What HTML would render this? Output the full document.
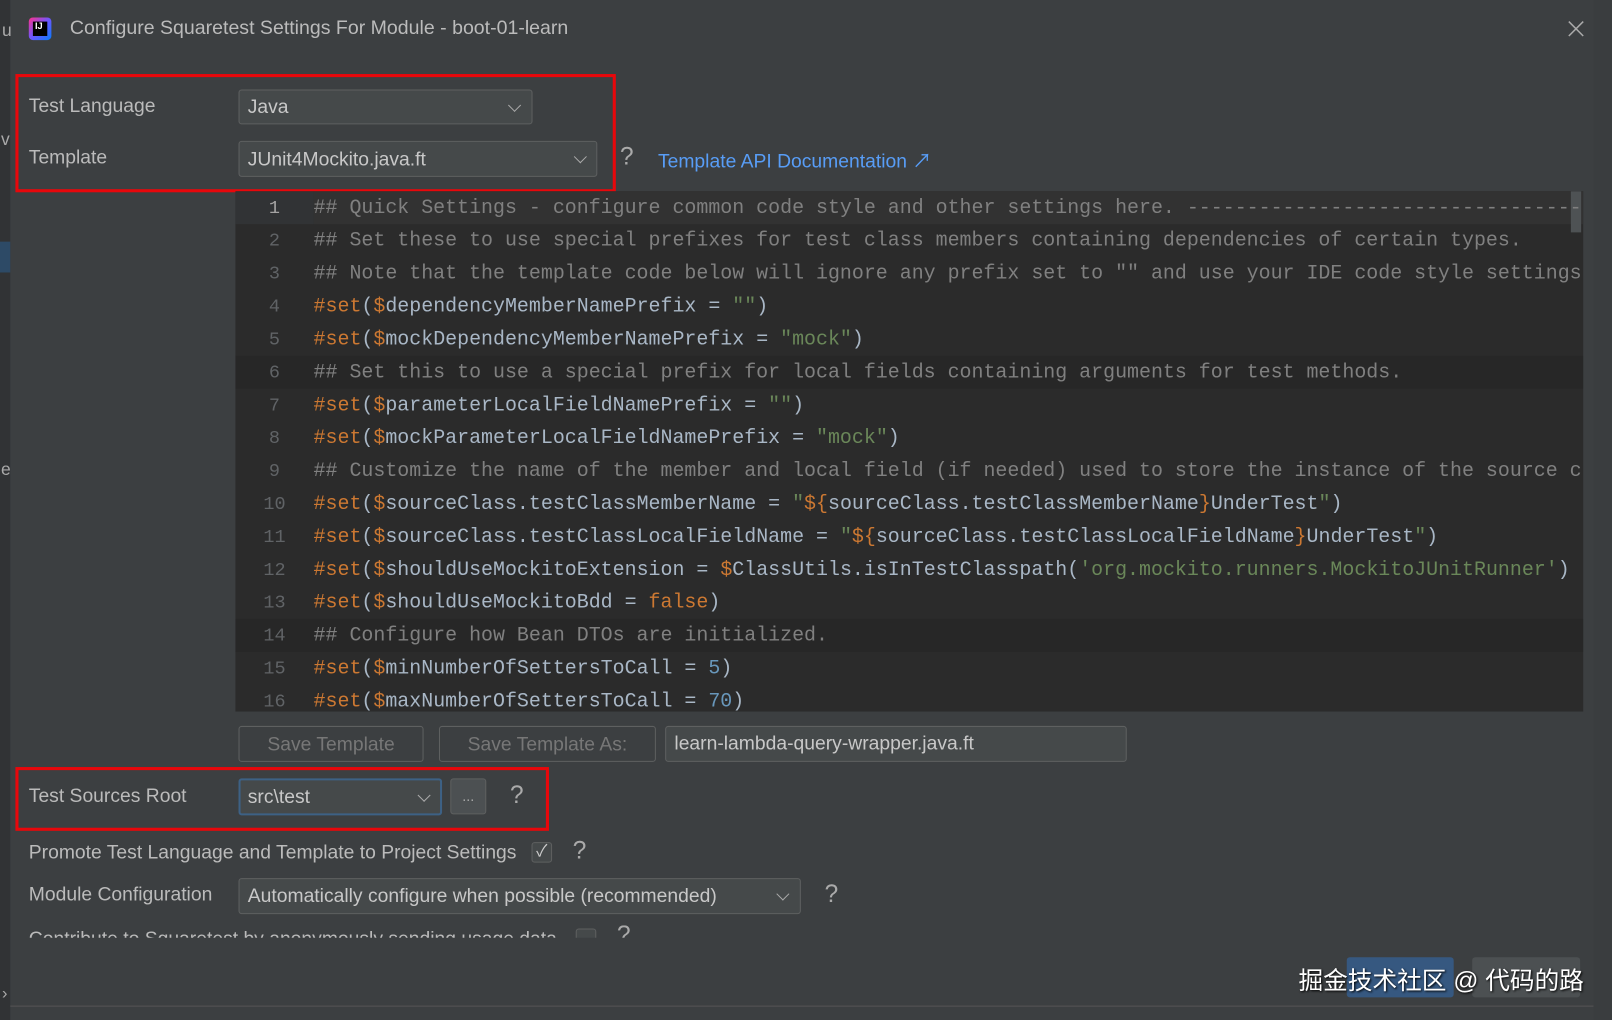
<!DOCTYPE html>
<html><head><meta charset="utf-8"><style>
html,body{margin:0;padding:0;width:1612px;height:1020px;overflow:hidden;background:#3c3f41}
#w{position:absolute;left:0;top:0;width:1568px;height:992px;transform:scale(1.02806,1.02823);transform-origin:0 0;background:#3c3f41;font-family:"Liberation Sans","Noto Sans CJK SC",sans-serif;color:#bbbbbb;font-size:18px}
.a{position:absolute;white-space:nowrap}
.lbl{font-size:18.8px;color:#bbbbbb}
.box{position:absolute;border:1px solid #5e6060;background:#45494a;border-radius:3px;box-sizing:border-box}
.chev{position:absolute;width:8px;height:8px;border-right:1.6px solid #aaa;border-bottom:1.6px solid #aaa;transform:rotate(45deg)}
.red{position:absolute;border:3px solid #e8070b;box-sizing:border-box}
.q{position:absolute;font-size:24px;color:#aaa}
#ed{position:absolute;left:229px;top:186px;width:1311px;height:506px;background:#2b2b2b;overflow:hidden}
.ln{position:absolute;left:0;width:76px;text-align:center;color:#606366;font-family:"Liberation Mono",monospace;font-size:18px;margin-top:2px}
.cd{position:absolute;left:76px;font-family:"Liberation Mono",monospace;font-size:19.4px;color:#a9b7c6;white-space:pre}
.c{color:#808080}.k{color:#cc7832}.s{color:#6a8759}.n{color:#6897bb}
.btn{position:absolute;border:1px solid #5e6060;border-radius:3px;background:#3c3f41;color:#777;text-align:center;box-sizing:border-box;font-size:18.8px}
</style></head><body><div id="w">
<div class="a" style="left:0;top:0;width:10px;height:992px;background:#313335"></div>
<div class="a" style="left:0;top:235px;width:10px;height:30px;background:#2d4a66"></div>
<div class="a" style="left:2px;top:20px;font-size:17px;color:#aaa">u</div>
<div class="a" style="left:1px;top:126px;font-size:17px;color:#aaa">v</div>
<div class="a" style="left:1px;top:447px;font-size:17px;color:#aaa">e</div>
<div class="a" style="left:28px;top:17px;width:22px;height:22px;border-radius:4px;background:linear-gradient(135deg,#ff318c,#6b57ff 50%,#087cfa)"></div>
<div class="a" style="left:32px;top:21px;width:14px;height:14px;background:#000"></div>
<div class="a" style="left:34px;top:20px;font-size:9px;color:#fff;font-weight:bold">IJ</div>
<div class="a" style="left:68px;top:17px;font-size:19px;color:#bbb">Configure Squaretest Settings For Module - boot-01-learn</div>
<svg class="a" style="left:1525px;top:20px" width="16" height="16"><path d="M1 1L15 15M15 1L1 15" stroke="#aaa" stroke-width="1.5"/></svg>
<div class="red" style="left:15px;top:72px;width:584px;height:115px"></div>
<div class="a lbl" style="left:28px;top:92px">Test Language</div>
<div class="box" style="left:232px;top:87px;width:286px;height:34px"></div>
<div class="a lbl" style="left:241px;top:93px;color:#c8c8c8">Java</div>
<div class="chev" style="left:496px;top:98px"></div>
<div class="a lbl" style="left:28px;top:142px">Template</div>
<div class="box" style="left:232px;top:137px;width:349px;height:35px"></div>
<div class="a lbl" style="left:241px;top:144px;color:#c8c8c8">JUnit4Mockito.java.ft</div>
<div class="chev" style="left:560px;top:148px"></div>
<div class="q" style="left:603px;top:139px">?</div>
<div class="a" style="left:640px;top:142px;color:#589df6;font-size:18.8px">Template API Documentation ↗</div>
<div id="ed">
<div class="a" style="left:76px;top:0;width:1235px;height:32px;background:#323232"></div>
<div class="a" style="left:0;top:0;width:76px;height:32px;background:#313335"></div>
<div class="a" style="left:0;top:160px;width:1311px;height:32px;background:#272727"></div>
<div class="a" style="left:0;top:416px;width:1311px;height:32px;background:#272727"></div>
<div class="a" style="left:1299px;top:0;width:10px;height:40px;background:#4e5254"></div>
<div class="ln" style="top:5px;color:#a4a3a3">1</div><div class="cd c" style="top:5px">## Quick Settings - configure common code style and other settings here. ----------------------------------------</div>
<div class="ln" style="top:37px">2</div><div class="cd c" style="top:37px">## Set these to use special prefixes for test class members containing dependencies of certain types.</div>
<div class="ln" style="top:69px">3</div><div class="cd c" style="top:69px">## Note that the template code below will ignore any prefix set to "" and use your IDE code style settings</div>
<div class="ln" style="top:101px">4</div><div class="cd" style="top:101px"><span class="k">#set</span>(<span class="k">$</span>dependencyMemberNamePrefix = <span class="s">""</span>)</div>
<div class="ln" style="top:133px">5</div><div class="cd" style="top:133px"><span class="k">#set</span>(<span class="k">$</span>mockDependencyMemberNamePrefix = <span class="s">"mock"</span>)</div>
<div class="ln" style="top:165px">6</div><div class="cd c" style="top:165px">## Set this to use a special prefix for local fields containing arguments for test methods.</div>
<div class="ln" style="top:197px">7</div><div class="cd" style="top:197px"><span class="k">#set</span>(<span class="k">$</span>parameterLocalFieldNamePrefix = <span class="s">""</span>)</div>
<div class="ln" style="top:229px">8</div><div class="cd" style="top:229px"><span class="k">#set</span>(<span class="k">$</span>mockParameterLocalFieldNamePrefix = <span class="s">"mock"</span>)</div>
<div class="ln" style="top:261px">9</div><div class="cd c" style="top:261px">## Customize the name of the member and local field (if needed) used to store the instance of the source c</div>
<div class="ln" style="top:293px">10</div><div class="cd" style="top:293px"><span class="k">#set</span>(<span class="k">$</span>sourceClass.testClassMemberName = <span class="s">"</span><span class="k">${</span>sourceClass.testClassMemberName<span class="k">}</span>UnderTest<span class="s">"</span>)</div>
<div class="ln" style="top:325px">11</div><div class="cd" style="top:325px"><span class="k">#set</span>(<span class="k">$</span>sourceClass.testClassLocalFieldName = <span class="s">"</span><span class="k">${</span>sourceClass.testClassLocalFieldName<span class="k">}</span>UnderTest<span class="s">"</span>)</div>
<div class="ln" style="top:357px">12</div><div class="cd" style="top:357px"><span class="k">#set</span>(<span class="k">$</span>shouldUseMockitoExtension = <span class="k">$</span>ClassUtils.isInTestClasspath(<span class="s">'org.mockito.runners.MockitoJUnitRunner'</span>)</div>
<div class="ln" style="top:389px">13</div><div class="cd" style="top:389px"><span class="k">#set</span>(<span class="k">$</span>shouldUseMockitoBdd = <span class="k">false</span>)</div>
<div class="ln" style="top:421px">14</div><div class="cd c" style="top:421px">## Configure how Bean DTOs are initialized.</div>
<div class="ln" style="top:453px">15</div><div class="cd" style="top:453px"><span class="k">#set</span>(<span class="k">$</span>minNumberOfSettersToCall = <span class="n">5</span>)</div>
<div class="ln" style="top:485px">16</div><div class="cd" style="top:485px"><span class="k">#set</span>(<span class="k">$</span>maxNumberOfSettersToCall = <span class="n">70</span>)</div>
</div>
<div class="a" style="left:1550px;top:0;width:18px;height:992px;background:#3a3d3f"></div>
<div class="btn" style="left:232px;top:706px;width:180px;height:35px;line-height:33px">Save Template</div>
<div class="btn" style="left:427px;top:706px;width:211px;height:35px;line-height:33px">Save Template As:</div>
<div class="box" style="left:647px;top:706px;width:449px;height:35px"></div>
<div class="a lbl" style="left:656px;top:712px;color:#c8c8c8">learn-lambda-query-wrapper.java.ft</div>
<div class="red" style="left:15px;top:746px;width:519px;height:62px"></div>
<div class="a lbl" style="left:28px;top:763px">Test Sources Root</div>
<div class="box" style="left:232px;top:757px;width:198px;height:36px;border:2px solid #3d6185"></div>
<div class="a lbl" style="left:241px;top:764px;color:#c8c8c8">src\test</div>
<div class="chev" style="left:408px;top:769px"></div>
<div class="btn" style="left:438px;top:757px;width:35px;height:35px;line-height:33px;background:#4c5052;color:#aaa;font-size:14px">...</div>
<div class="q" style="left:496px;top:760px">?</div>
<div class="a lbl" style="left:28px;top:818px">Promote Test Language and Template to Project Settings</div>
<div class="box" style="left:517px;top:819px;width:20px;height:20px;color:#ccc;font-size:16px;line-height:18px;text-align:center">✓</div>
<div class="q" style="left:557px;top:814px">?</div>
<div class="a lbl" style="left:28px;top:859px">Module Configuration</div>
<div class="box" style="left:232px;top:854px;width:547px;height:35px"></div>
<div class="a lbl" style="left:241px;top:860px;color:#c8c8c8">Automatically configure when possible (recommended)</div>
<div class="chev" style="left:757px;top:865px"></div>
<div class="q" style="left:802px;top:856px">?</div>
<div class="a" style="left:0;top:900px;width:700px;height:12px;overflow:hidden">
<div class="a lbl" style="left:28px;top:2px">Contribute to Squaretest by anonymously sending usage data</div>
<div class="box" style="left:560px;top:3px;width:20px;height:20px"></div>
<div class="q" style="left:600px;top:-4px">?</div></div>
<div class="a" style="left:1310px;top:931px;width:104px;height:39px;background:#365880;border-radius:3px"></div>
<div class="a" style="left:1432px;top:931px;width:105px;height:39px;background:#4c5052;border-radius:3px"></div>
<div class="a" style="left:1263px;top:934px;font-size:24px;color:#fff;text-shadow:1px 1px 2px #000">掘金技术社区 @ 代码的路</div>
<div class="a" style="left:10px;top:978px;width:1540px;height:1px;background:#555"></div>
<div class="a" style="left:2px;top:958px;color:#aaa;font-size:16px">›</div>
</div></body></html>
